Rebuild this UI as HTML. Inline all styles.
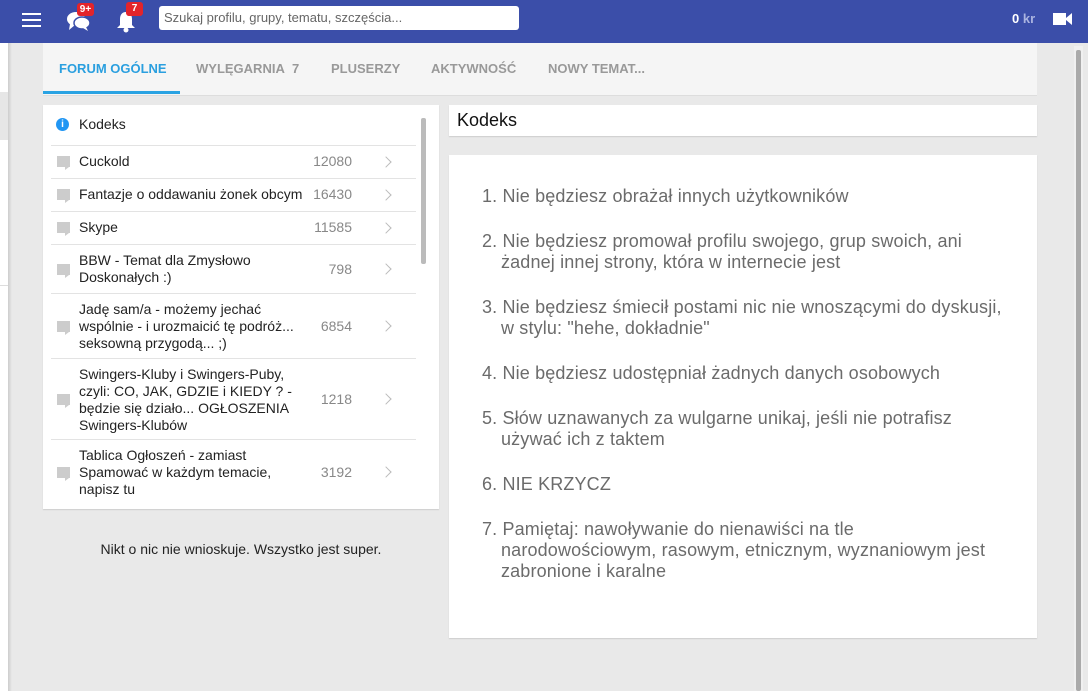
<!DOCTYPE html>
<html><head><meta charset="utf-8"><style>
*{box-sizing:border-box;margin:0;padding:0}
body{width:1088px;height:691px;overflow:hidden;background:#e9e9e9;font-family:"Liberation Sans",sans-serif;position:relative}
.hdr{position:absolute;left:0;top:0;width:1088px;height:43px;background:#3b4ea9}
.leftw{position:absolute;left:0;top:43px;width:8px;height:648px;background:#fff}
.leftg{position:absolute;left:0;top:92px;width:8px;height:48px;background:#e6e6e6}
.leftl{position:absolute;left:0;top:285px;width:8px;height:1px;background:#ddd}
.shadow{position:absolute;left:8px;top:43px;width:4px;height:648px;background:linear-gradient(90deg,#ccc,#e9e9e9)}
.tabs{position:absolute;left:43px;top:43px;width:994px;height:53px;background:#f5f5f5;border-bottom:1px solid #ddd}
.tab{position:absolute;top:18px;font-size:13px;font-weight:bold;color:#999}
.panel{position:absolute;background:#fff;box-shadow:0 1px 1px #ccc}
.row{position:absolute;left:8px;width:365px;border-top:1px solid #e3e3e3;font-size:14px;color:#222}
.row .t{position:absolute;left:28px;line-height:17px}
.row .n{position:absolute;right:64px;color:#888}
.row .a{position:absolute;right:26px;width:8px;height:8px;border-right:1.5px solid #bbb;border-top:1.5px solid #bbb;transform:rotate(45deg)}
.ic{position:absolute;left:6px;width:13px;height:11px;background:#ccc}
.ic:after{content:"";position:absolute;left:8px;top:11px;border-left:4px solid #ccc;border-bottom:3px solid transparent}
ol{position:absolute;left:482px;top:186px;width:560px;font-size:18px;color:#6b6b6b;line-height:21px;list-style:none;white-space:nowrap;letter-spacing:0.15px}
ol li{margin-bottom:24px;padding-left:19px;text-indent:-19px}
</style></head><body>
<div class="hdr">
 <div style="position:absolute;left:22px;top:13px;width:19px;height:2px;background:#fff;box-shadow:0 6px #fff,0 12px #fff"></div>
 <svg style="position:absolute;left:66px;top:10px" width="26" height="22" viewBox="0 0 26 22"><ellipse cx="10" cy="9" rx="9" ry="7" fill="#fff"/><path d="M4 14 L3 20 L9 15Z" fill="#fff"/><ellipse cx="16" cy="13" rx="8" ry="6" fill="#fff" stroke="#3b4ea9" stroke-width="1.5"/><path d="M20 17 L22 21 L17 18Z" fill="#fff"/></svg>
 <div style="position:absolute;left:77px;top:3px;width:17px;height:13px;background:#e3242b;border-radius:3px;color:#fff;font-size:10px;font-weight:bold;text-align:center;line-height:13px">9+</div>
 <svg style="position:absolute;left:116px;top:11px" width="20" height="22" viewBox="0 0 20 22"><path d="M10 1C6 1 4 4 4 8v6l-3 3h18l-3-3V8c0-4-2-7-6-7z" fill="#fff"/><circle cx="10" cy="19" r="2.5" fill="#fff"/></svg>
 <div style="position:absolute;left:126px;top:2px;width:17px;height:14px;background:#e3242b;border-radius:3px;color:#fff;font-size:10px;font-weight:bold;text-align:center;line-height:14px">7</div>
 <div style="position:absolute;left:159px;top:6px;width:360px;height:24px;background:#fff;border-radius:3px;font-size:13px;color:#666;padding:5px 5px;line-height:14px">Szukaj profilu, grupy, tematu, szczęścia...</div>
 <div style="position:absolute;left:1012px;top:11px;font-size:13px;font-weight:bold;color:#fff">0<span style="color:#aab4e0"> kr</span></div>
 <svg style="position:absolute;left:1053px;top:13px" width="20" height="12"><rect x="0" y="0" width="13" height="12" fill="#fff"/><path d="M13 5 L19 0 V12 L13 7Z" fill="#fff"/></svg>
</div>
<div class="leftw"></div><div class="leftg"></div><div class="leftl"></div><div class="shadow"></div>
<div style="position:absolute;left:1074px;top:46px;width:9px;height:645px;background:#f0f0f0"></div>
<div style="position:absolute;left:1076px;top:50px;width:5px;height:641px;background:#aaa;border-radius:2px"></div>
<div class="tabs">
 <div class="tab" style="left:16px;color:#2a9fdf">FORUM OGÓLNE</div>
 <div style="position:absolute;left:0;top:48px;width:137px;height:3px;background:#2aa3e3"></div>
 <div class="tab" style="left:153px">WYLĘGARNIA&nbsp; 7</div>
 <div class="tab" style="left:288px">PLUSERZY</div>
 <div class="tab" style="left:388px">AKTYWNOŚĆ</div>
 <div class="tab" style="left:505px">NOWY TEMAT...</div>
</div>
<div class="panel" style="left:43px;top:105px;width:396px;height:404px">
 <div style="position:absolute;left:13px;top:13px;width:13px;height:13px;border-radius:50%;background:#2196f3;color:#fff;font-size:10px;font-weight:bold;text-align:center;line-height:13px">i</div>
 <div style="position:absolute;left:36px;top:11px;font-size:14px;color:#222">Kodeks</div>
 <div style="position:absolute;left:378px;top:13px;width:5px;height:146px;background:#bbb;border-radius:2px"></div>
 <div class="row" style="top:40px;height:33px"><div class="ic" style="top:10px"></div><div class="t" style="top:7px">Cuckold</div><div class="n" style="top:7px">12080</div><div class="a" style="top:12px"></div></div>
 <div class="row" style="top:73px;height:33px"><div class="ic" style="top:10px"></div><div class="t" style="top:7px">Fantazje o oddawaniu żonek obcym</div><div class="n" style="top:7px">16430</div><div class="a" style="top:12px"></div></div>
 <div class="row" style="top:106px;height:33px"><div class="ic" style="top:10px"></div><div class="t" style="top:7px">Skype</div><div class="n" style="top:7px">11585</div><div class="a" style="top:12px"></div></div>
 <div class="row" style="top:139px;height:49px"><div class="ic" style="top:19px"></div><div class="t" style="top:7px">BBW - Temat dla Zmysłowo<br>Doskonałych :)</div><div class="n" style="top:16px">798</div><div class="a" style="top:20px"></div></div>
 <div class="row" style="top:188px;height:65px"><div class="ic" style="top:27px"></div><div class="t" style="top:7px">Jadę sam/a - możemy jechać<br>wspólnie - i urozmaicić tę podróż...<br>seksowną przygodą... ;)</div><div class="n" style="top:24px">6854</div><div class="a" style="top:28px"></div></div>
 <div class="row" style="top:253px;height:81px"><div class="ic" style="top:35px"></div><div class="t" style="top:7px">Swingers-Kluby i Swingers-Puby,<br>czyli: CO, JAK, GDZIE i KIEDY ? -<br>będzie się działo... OGŁOSZENIA<br>Swingers-Klubów</div><div class="n" style="top:32px">1218</div><div class="a" style="top:36px"></div></div>
 <div class="row" style="top:334px;height:65px"><div class="ic" style="top:27px"></div><div class="t" style="top:7px">Tablica Ogłoszeń - zamiast<br>Spamować w każdym temacie,<br>napisz tu</div><div class="n" style="top:24px">3192</div><div class="a" style="top:28px"></div></div>
</div>
<div style="position:absolute;left:43px;top:541px;width:396px;text-align:center;font-size:14px;color:#222">Nikt o nic nie wnioskuje. Wszystko jest super.</div>
<div class="panel" style="left:449px;top:105px;width:588px;height:31px"><div style="position:absolute;left:8px;top:5px;font-size:18px;color:#111">Kodeks</div></div>
<div class="panel" style="left:449px;top:155px;width:588px;height:483px"></div>
<ol>
<li>1. Nie będziesz obrażał innych użytkowników</li>
<li>2. Nie będziesz promował profilu swojego, grup swoich, ani<br>żadnej innej strony, która w internecie jest</li>
<li>3. Nie będziesz śmiecił postami nic nie wnoszącymi do dyskusji,<br>w stylu: "hehe, dokładnie"</li>
<li>4. Nie będziesz udostępniał żadnych danych osobowych</li>
<li>5. Słów uznawanych za wulgarne unikaj, jeśli nie potrafisz<br>używać ich z taktem</li>
<li>6. NIE KRZYCZ</li>
<li>7. Pamiętaj: nawoływanie do nienawiści na tle<br>narodowościowym, rasowym, etnicznym, wyznaniowym jest<br>zabronione i karalne</li>
</ol>
</body></html>
